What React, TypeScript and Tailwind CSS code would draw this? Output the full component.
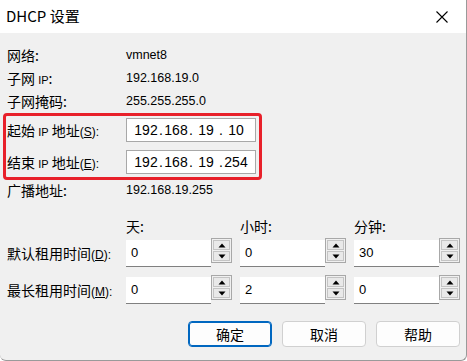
import React from 'react';

const cjk = { fontFamily: '"Noto Sans CJK SC", "Liberation Sans", sans-serif' };
const latin = { fontFamily: '"Liberation Sans", "Noto Sans CJK SC", sans-serif' };

function Hot({ k }: { k: string }) {
  return (
    <span className="text-[12px]" style={latin}>
      (<span className="underline">{k}</span>):
    </span>
  );
}

function IpField({ parts }: { parts: string[] }) {
  return (
    <div
      className="w-[130px] h-[24px] bg-white border border-[#a8a8a8] flex items-center pl-[7px] text-[14px] text-black"
      style={latin}
    >
      {parts.map((p, i) => (
        <React.Fragment key={i}>
          {i > 0 && <span className="w-[6px] text-center">.</span>}
          <span className="w-[24px] text-center">{p}</span>
        </React.Fragment>
      ))}
    </div>
  );
}

function Spin({ value }: { value: string }) {
  return (
    <div className="flex items-start w-[107px] h-[27px]">
      <div
        className="w-[85px] h-[27px] bg-white border-b border-[#808080] pl-[5px] pt-[3px] text-[13px] text-black"
        style={latin}
      >
        {value}
      </div>
      <div className="w-[21px] h-[25px] mt-[-2px] border border-[#a8a8a8] p-[1px] flex flex-col gap-[1px] bg-[#f0f0f0]">
        <div className="flex-1 border border-[#c4c4c4] bg-[#e9e9e9] flex items-center justify-center">
          <svg width="8" height="5" viewBox="0 0 8 5"><path d="M4 0.5 L7.5 4.5 L0.5 4.5 Z" fill="#000" /></svg>
        </div>
        <div className="flex-1 border border-[#c4c4c4] bg-[#e9e9e9] flex items-center justify-center">
          <svg width="8" height="5" viewBox="0 0 8 5"><path d="M0.5 0.5 L7.5 0.5 L4 4.5 Z" fill="#000" /></svg>
        </div>
      </div>
    </div>
  );
}

export default function App() {
  const info = [
    { label: <>网络:</>, value: 'vmnet8' },
    { label: <>子网 <span className="text-[11px]" style={latin}>IP</span>:</>, value: '192.168.19.0' },
    { label: <>子网掩码:</>, value: '255.255.255.0' },
  ];

  return (
    <div className="w-[467px] h-[361px] overflow-hidden bg-[#f0f0f0] border-r border-b border-[#9a9a9a] rounded-bl-[6px] rounded-br-[6px] text-black" style={cjk}>
      {/* Title bar */}
      <div className="h-[33px] bg-white flex items-center justify-between pl-[6px] pr-[18px]">
        <span className="text-[15px]">DHCP 设置</span>
        <svg width="12" height="12" viewBox="0 0 12 12">
          <path d="M0.5 0.5 L11.5 11.5 M11.5 0.5 L0.5 11.5" stroke="#000" strokeWidth="1.1" />
        </svg>
      </div>

      <div className="pt-[11px]">
        {info.map((r, i) => (
          <div key={i} className="h-[23px] flex items-center pl-[7px] text-[14px]">
            <div className="w-[119px]">{r.label}</div>
            <div className="text-[12.5px]" style={latin}>{r.value}</div>
          </div>
        ))}

        {/* Highlighted range */}
        <div className="ml-[3px] w-[259px] border-[3px] border-[#e8202a] rounded-[4px] pt-[2px] pb-[3px] pl-[1px] flex flex-col gap-[8px]">
          <div className="flex items-center text-[14px]">
            <div className="w-[119px]">起始 <span className="text-[11px]" style={latin}>IP</span> 地址<Hot k="S" /></div>
            <IpField parts={['192', '168', '19', '10']} />
          </div>
          <div className="flex items-center text-[14px]">
            <div className="w-[119px]">结束 <span className="text-[11px]" style={latin}>IP</span> 地址<Hot k="E" /></div>
            <IpField parts={['192', '168', '19', '254']} />
          </div>
        </div>

        <div className="h-[20px] flex items-center pl-[7px] text-[14px]">
          <div className="w-[119px]">广播地址:</div>
          <div className="text-[12.5px]" style={latin}>192.168.19.255</div>
        </div>

        {/* Lease times */}
        <div className="mt-[16px] h-[20px] flex items-center pl-[126px] gap-[7px] text-[14px]">
          <div className="w-[107px]">天:</div>
          <div className="w-[107px]">小时:</div>
          <div className="w-[107px]">分钟:</div>
        </div>
        <div className="mt-[4px] flex flex-col gap-[10px]">
          <div className="flex items-center pl-[7px] text-[14px]">
            <div className="w-[119px]">默认租用时间<Hot k="D" /></div>
            <div className="flex gap-[7px]">
              <Spin value="0" />
              <Spin value="0" />
              <Spin value="30" />
            </div>
          </div>
          <div className="flex items-center pl-[7px] text-[14px]">
            <div className="w-[119px]">最长租用时间<Hot k="M" /></div>
            <div className="flex gap-[7px]">
              <Spin value="0" />
              <Spin value="2" />
              <Spin value="0" />
            </div>
          </div>
        </div>

        {/* Buttons */}
        <div className="mt-[17px] flex justify-end gap-[10px] pr-[6px] text-[14px]">
          <button className="w-[84px] h-[26px] bg-[#fdfdfd] border border-[#0067c0] rounded-[4px] shadow-[inset_0_0_0_1px_#0067c0]">确定</button>
          <button className="w-[84px] h-[26px] bg-[#fdfdfd] border border-[#d0d0d0] rounded-[4px]">取消</button>
          <button className="w-[84px] h-[26px] bg-[#fdfdfd] border border-[#d0d0d0] rounded-[4px]">帮助</button>
        </div>
      </div>
    </div>
  );
}
